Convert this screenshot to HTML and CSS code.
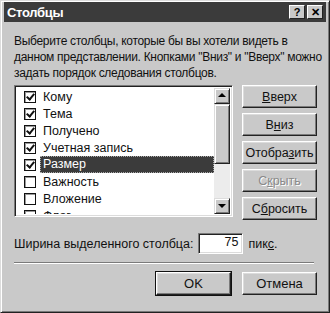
FILE: index.html
```html
<!DOCTYPE html>
<html lang="ru">
<head>
  <meta charset="UTF-8" />
  <title>Столбцы</title>
  <link rel="stylesheet" href="styles.css">
</head>
<body>
  <div class="window">
    <div class="titlebar">
      <span class="title">Столбцы</span>
      <span class="tbtn">?</span>
      <span class="tbtn">&#x2715;</span>
    </div>

    <p class="intro">Выберите столбцы, которые бы вы хотели видеть в данном представлении. Кнопками "Вниз" и "Вверх" можно задать порядок следования столбцов.</p>

    <div class="main">
      <div class="listbox">
        <ul class="items">
          <li><span class="chk on"></span>Кому</li>
          <li><span class="chk on"></span>Тема</li>
          <li><span class="chk on"></span>Получено</li>
          <li><span class="chk on"></span>Учетная запись</li>
          <li class="sel"><span class="chk on"></span><span class="lbl">Размер</span></li>
          <li><span class="chk"></span>Важность</li>
          <li><span class="chk"></span>Вложение</li>
          <li><span class="chk"></span>Флаг</li>
        </ul>
        <div class="scrollbar">
          <span class="arrow up"></span>
          <span class="thumb"></span>
          <span class="track"></span>
          <span class="arrow down"></span>
        </div>
      </div>

      <div class="side">
        <button><u>В</u>верх</button>
        <button>В<u>н</u>из</button>
        <button>Отобра<u>з</u>ить</button>
        <button class="off">С<u>к</u>рыть</button>
        <button>С<u>б</u>росить</button>
      </div>
    </div>

    <div class="width-row">
      <span>Ширина выделенного столбца:</span>
      <span class="field">75</span>
      <span>пик<u>с</u>.</span>
    </div>

    <hr class="sep">

    <div class="footer">
      <button class="default">OK</button>
      <button>Отмена</button>
    </div>
  </div>
</body>
</html>
```

FILE: styles.css
```css
body {
  margin: 0;
  background: #c9c9c9;
  font-family: "Liberation Sans", Arial, sans-serif;
  font-size: 12px;
  color: #111;
}
.window {
  width: 330px;
  height: 313px;
  box-sizing: border-box;
  background: #c9c9c9;
  border-top: 1px solid #dcdcdc;
  border-left: 1px solid #dcdcdc;
  border-right: 1px solid #222;
  border-bottom: 1px solid #222;
  box-shadow: inset 1px 1px 0 #fff, inset -1px -1px 0 #7a7a7a;
  padding: 1px 3px 3px 3px;
}
.titlebar {
  height: 20px;
  background: #3b3b3b;
  display: flex;
  align-items: center;
  gap: 2px;
  padding: 0 3px 0 3px;
}
.title {
  flex: 1;
  color: #fff;
  font-weight: bold;
  font-size: 13px;
  letter-spacing: -0.3px;
}
.tbtn {
  width: 16px;
  height: 14px;
  box-sizing: border-box;
  background: #c9c9c9;
  border-top: 1px solid #fff;
  border-left: 1px solid #fff;
  border-right: 1px solid #222;
  border-bottom: 1px solid #222;
  font-weight: bold;
  font-size: 11px;
  line-height: 12px;
  text-align: center;
  color: #000;
}
.intro {
  margin: 11px 4px 0 10px;
  line-height: 16px;
  font-size: 12px;
  letter-spacing: -0.3px;
}
.main {
  display: flex;
  gap: 9px;
  margin: 4px 0 0 10px;
}
.listbox {
  width: 219px;
  height: 132px;
  box-sizing: border-box;
  background: #fff;
  border-top: 1px solid #7a7a7a;
  border-left: 1px solid #7a7a7a;
  border-right: 1px solid #fff;
  border-bottom: 1px solid #fff;
  box-shadow: inset 1px 1px 0 #222, inset -1px -1px 0 #dcdcdc;
  display: flex;
  padding: 2px 2px 2px 2px;
  overflow: hidden;
}
.items {
  list-style: none;
  margin: 0;
  padding: 0;
  flex: 1;
  overflow: hidden;
}
.items li {
  height: 17px;
  display: flex;
  align-items: center;
  padding-left: 7px;
  font-size: 12.5px;
  white-space: nowrap;
}
.chk {
  width: 12px;
  height: 12px;
  box-sizing: border-box;
  border: 1px solid #111;
  box-shadow: inset 1px 1px 0 #999;
  background: #fff;
  margin-right: 7px;
  position: relative;
  flex: none;
}
.chk.on::after {
  content: "";
  position: absolute;
  left: 3px;
  top: 0px;
  width: 3px;
  height: 6px;
  border-right: 2px solid #111;
  border-bottom: 2px solid #111;
  transform: rotate(40deg);
}
.sel .lbl {
  flex: 1;
  background: #3b3b3b;
  color: #fff;
  height: 17px;
  line-height: 17px;
  margin-left: -3px;
  padding-left: 3px;
  outline: 1px dotted #aaa;
  outline-offset: -1px;
}
.scrollbar {
  width: 16px;
  display: flex;
  flex-direction: column;
  background: #ececec;
}
.arrow, .thumb {
  box-sizing: border-box;
  background: #c9c9c9;
  border-top: 1px solid #dcdcdc;
  border-left: 1px solid #dcdcdc;
  border-right: 1px solid #222;
  border-bottom: 1px solid #222;
  box-shadow: inset 1px 1px 0 #fff, inset -1px -1px 0 #7a7a7a;
  position: relative;
}
.arrow {
  height: 16px;
  flex: none;
}
.arrow::after {
  content: "";
  position: absolute;
  left: 3px;
  border-left: 4px solid transparent;
  border-right: 4px solid transparent;
}
.arrow.up::after {
  top: 4px;
  border-bottom: 4px solid #000;
}
.arrow.down::after {
  top: 5px;
  border-top: 4px solid #000;
}
.thumb {
  height: 60px;
  flex: none;
}
.track {
  flex: 1;
}
.side {
  display: flex;
  flex-direction: column;
  gap: 5px;
}
button {
  width: 75px;
  height: 23px;
  box-sizing: border-box;
  background: #c9c9c9;
  font-family: "Liberation Sans", Arial, sans-serif;
  font-size: 12.5px;
  color: #111;
  padding: 0;
  border-top: 1px solid #fff;
  border-left: 1px solid #fff;
  border-right: 1px solid #222;
  border-bottom: 1px solid #222;
  box-shadow: inset -1px -1px 0 #7a7a7a, inset 1px 1px 0 #dcdcdc;
}
button.off {
  color: #8a8a8a;
  text-shadow: 1px 1px 0 #fff;
}
button.default {
  outline: 1px solid #111;
}
.width-row {
  display: flex;
  align-items: center;
  margin: 13px 0 0 10px;
  font-size: 12.5px;
}
.field {
  width: 45px;
  height: 21px;
  box-sizing: border-box;
  margin: 0 5px 0 5px;
  background: #fff;
  text-align: right;
  padding-right: 4px;
  line-height: 17px;
  border-top: 1px solid #7a7a7a;
  border-left: 1px solid #7a7a7a;
  border-right: 1px solid #fff;
  border-bottom: 1px solid #fff;
  box-shadow: inset 1px 1px 0 #222, inset -1px -1px 0 #dcdcdc;
}
.sep {
  margin: 8px 12px 0 10px;
  border: none;
  border-top: 1px solid #7a7a7a;
  border-bottom: 1px solid #fff;
}
.footer {
  display: flex;
  justify-content: flex-end;
  gap: 11px;
  margin: 8px 9px 0 0;
}
.footer button {
  font-size: 13px;
}
```
